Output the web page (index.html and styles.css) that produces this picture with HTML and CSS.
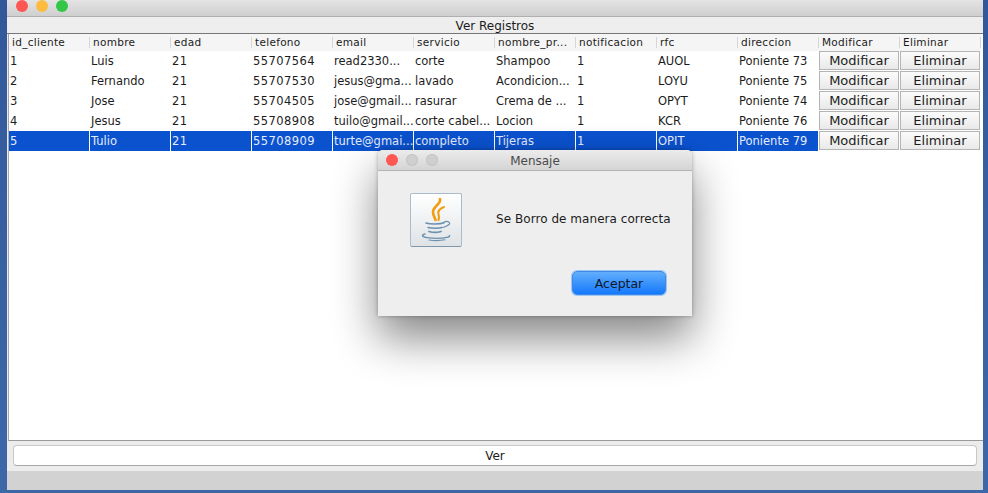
FILE: index.html
```html
<!DOCTYPE html>
<html lang="en">
<head>
    <meta charset="UTF-8">
    <meta name="viewport" content="width=device-width, initial-scale=1.0">
    <title>Ver Registros</title>
    <link rel="stylesheet" href="styles.css">
</head>
<body>
    <div class="window">
        <div class="titlebar">
            <span class="light light-red"></span>
            <span class="light light-yellow"></span>
            <span class="light light-green"></span>
        </div>
        <div class="caption">Ver Registros</div>

        <div class="table-area">
            <table class="records">
                <thead>
                    <tr>
                        <th>id_cliente</th>
                        <th>nombre</th>
                        <th>edad</th>
                        <th>telefono</th>
                        <th>email</th>
                        <th>servicio</th>
                        <th>nombre_pr...</th>
                        <th>notificacion</th>
                        <th>rfc</th>
                        <th>direccion</th>
                        <th>Modificar</th>
                        <th>Eliminar</th>
                    </tr>
                </thead>
                <tbody>
                    <tr>
                        <td>1</td><td>Luis</td><td class="num">21</td><td class="num">55707564</td><td>read2330...</td><td>corte</td><td>Shampoo</td><td>1</td><td>AUOL</td><td>Poniente 73</td>
                        <td class="cell-btn"><button class="row-btn">Modificar</button></td>
                        <td class="cell-btn"><button class="row-btn">Eliminar</button></td>
                    </tr>
                    <tr>
                        <td>2</td><td>Fernando</td><td class="num">21</td><td class="num">55707530</td><td>jesus@gma...</td><td>lavado</td><td>Acondicion...</td><td>1</td><td>LOYU</td><td>Poniente 75</td>
                        <td class="cell-btn"><button class="row-btn">Modificar</button></td>
                        <td class="cell-btn"><button class="row-btn">Eliminar</button></td>
                    </tr>
                    <tr>
                        <td>3</td><td>Jose</td><td class="num">21</td><td class="num">55704505</td><td>jose@gmail...</td><td>rasurar</td><td>Crema de ...</td><td>1</td><td>OPYT</td><td>Poniente 74</td>
                        <td class="cell-btn"><button class="row-btn">Modificar</button></td>
                        <td class="cell-btn"><button class="row-btn">Eliminar</button></td>
                    </tr>
                    <tr>
                        <td>4</td><td>Jesus</td><td class="num">21</td><td class="num">55708908</td><td>tuilo@gmail...</td><td>corte cabel...</td><td>Locion</td><td>1</td><td>KCR</td><td>Poniente 76</td>
                        <td class="cell-btn"><button class="row-btn">Modificar</button></td>
                        <td class="cell-btn"><button class="row-btn">Eliminar</button></td>
                    </tr>
                    <tr class="selected">
                        <td>5</td><td>Tulio</td><td class="num">21</td><td class="num">55708909</td><td>turte@gmai...</td><td>completo</td><td>Tijeras</td><td>1</td><td>OPIT</td><td>Poniente 79</td>
                        <td class="cell-btn"><button class="row-btn">Modificar</button></td>
                        <td class="cell-btn"><button class="row-btn">Eliminar</button></td>
                    </tr>
                </tbody>
            </table>
        </div>

        <div class="footer">
            <button class="btn-ver">Ver</button>
        </div>
        <div class="statusbar"></div>
    </div>

    <!-- Dialog floats over the table -->
    <div class="dialog">
        <div class="dialog-title">
            <span class="light light-red"></span>
            <span class="light light-off"></span>
            <span class="light light-off"></span>
            <span class="dialog-name">Mensaje</span>
        </div>
        <div class="dialog-body">
            <div class="dialog-icon">
                <svg width="34" height="44" viewBox="0 0 34 44">
                    <g fill="none" stroke="#f29c10" stroke-linecap="round">
                        <path d="M21 1c1.500 5-7 7-7 13 0 3 1.500 5 2.500 8" stroke-width="2.600"/>
                        <path d="M25 9c-5 2-6.500 4.500-5.500 7.500 .5 2 1 3.500 0 5.500" stroke-width="2.100"/>
                    </g>
                    <g fill="none" stroke="#6c90ae" stroke-linecap="round">
                        <path d="M7 25c4 1.400 14 1.400 18-.2" stroke-width="1.600"/>
                        <path d="M9 29.500c4 1 11 1 14 0" stroke-width="1.500"/>
                        <path d="M10 33.500c3 .9 9 .9 12 0" stroke-width="1.800"/>
                        <path d="M25 24c4-1.500 7 .5 5 2.500-1 1-3 2-6 3" stroke-width="1.200"/>
                        <path d="M6 36c-4 1-3 3 2 3.600 6 1 14 1 20-.2 2-.4 3-1.200 2.500-1.800" stroke-width="1.400"/>
                        <path d="M10 42c5 .8 11 .8 16-.2" stroke-width="1.100"/>
                    </g>
                </svg>
            </div>
            <div class="dialog-text">Se Borro de manera correcta</div>
        </div>
        <div class="dialog-actions">
            <button class="btn-accept">Aceptar</button>
        </div>
    </div>
</body>
</html>
```

FILE: styles.css
```css
html, body {
    margin: 0;
    height: 493px;
    overflow: hidden;
}

body {
    position: relative;
    box-sizing: border-box;
    padding: 0 5px 3px 7px;
    background: linear-gradient(to bottom, #33589a, #3d68a8);
    font-family: "DejaVu Sans", Arial, sans-serif;
    color: #1c1c1c;
}

.window {
    display: flex;
    flex-direction: column;
    height: 490px;
    background-color: #ececec;
}

.titlebar {
    display: flex;
    gap: 8px;
    height: 17px;
    box-sizing: border-box;
    padding-left: 9px;
    align-items: flex-start;
    background: linear-gradient(to bottom, #e4e4e4, #cfcfcf);
    border-bottom: 1px solid #b0b0b0;
    overflow: hidden;
}

.light {
    display: block;
    flex: none;
    width: 12px;
    height: 12px;
    border-radius: 50%;
}

.light-red {
    background-color: #fc5753;
}

.light-yellow {
    background-color: #fdbc40;
}

.light-green {
    background-color: #33c748;
}

.light-off {
    background-color: #cfcfcf;
    box-shadow: inset 0 0 0 1px #c4c4c4;
}

.caption {
    height: 17px;
    line-height: 18px;
    box-sizing: border-box;
    font-size: 12px;
    text-align: center;
    background-color: #eeeeee;
    border-bottom: 1px solid #777;
}

.table-area {
    flex: 1;
    margin-left: 1px;
    background-color: #fff;
    border-left: 1px solid #a8a8a8;
    border-bottom: 1px solid #9a9a9a;
}

.records {
    width: 972px;
    table-layout: fixed;
    border-collapse: separate;
    border-spacing: 0;
    font-size: 11.500px;
}

.records th {
    height: 17px;
    padding: 0 0 2px 3px;
    font-size: 10.500px;
    font-weight: normal;
    letter-spacing: 0.3px;
    text-align: left;
    white-space: nowrap;
    background: #f5f5f5 linear-gradient(#d6d6d6, #d6d6d6) no-repeat right center / 1px 11px;
    box-sizing: border-box;
}

.records td {
    height: 20px;
    padding: 0 0 0 1px;
    white-space: nowrap;
    border-right: 1px solid #fff;
    box-sizing: border-box;
}

.records .num {
    letter-spacing: 0.45px;
}

.records .selected td {
    background-color: #0b52cf;
    color: #e4ecfb;
}

.records .cell-btn,
.records .selected .cell-btn {
    padding: 0 0 1px 0;
    background-color: #fff;
    border-right: 0;
}

.row-btn {
    display: block;
    width: 80px;
    height: 19px;
    padding: 0;
    font-family: inherit;
    font-size: 13px;
    line-height: 17px;
    color: #1c1c1c;
    background: linear-gradient(to bottom, #fbfbfb, #e9e9e9);
    border: 1px solid #b4b4b4;
}

.footer {
    display: flex;
    height: 30px;
    box-sizing: border-box;
    padding: 4px 6px 5px 6px;
    background-color: #ececec;
}

.btn-ver {
    flex: 1;
    height: 21px;
    padding: 0;
    font-family: inherit;
    font-size: 12px;
    color: #1c1c1c;
    background-color: #fff;
    border: 1px solid #c8c8c8;
    border-bottom-color: #a8a8a8;
    border-radius: 4px;
}

.statusbar {
    height: 19px;
    background-color: #d2d2d2;
}

.dialog {
    position: absolute;
    left: 378px;
    top: 150px;
    width: 314px;
    height: 166px;
    background-color: #eeeeee;
    border-radius: 5px 5px 0 0;
    box-shadow: 0 22px 45px rgba(0, 0, 0, 0.48), 0 0 4px rgba(0, 0, 0, 0.3);
}

.dialog-title {
    position: relative;
    display: flex;
    gap: 8px;
    align-items: center;
    height: 21px;
    box-sizing: border-box;
    padding-left: 8px;
    background: linear-gradient(to bottom, #ececec, #d4d4d4);
    border-bottom: 1px solid #b4b4b4;
    border-radius: 5px 5px 0 0;
}

.dialog-name {
    position: absolute;
    left: 0;
    right: 0;
    top: 4px;
    font-size: 12px;
    text-align: center;
    color: #4a4a4a;
}

.dialog-body {
    display: flex;
    align-items: center;
    padding: 22px 0 0 32px;
}

.dialog-icon {
    display: flex;
    align-items: center;
    justify-content: center;
    width: 52px;
    height: 54px;
    box-sizing: border-box;
    background: linear-gradient(to bottom, #ffffff, #dfe3e6);
    border: 1px solid #a9bccb;
    border-bottom-color: #7f97ab;
    border-radius: 2px;
}

.dialog-text {
    margin: -2px 0 0 34px;
    font-size: 12px;
    letter-spacing: 0.05px;
    white-space: nowrap;
}

.dialog-actions {
    display: flex;
    justify-content: flex-end;
    padding: 24px 26px 0 0;
}

.btn-accept {
    width: 94px;
    height: 24px;
    padding: 0;
    font-family: inherit;
    font-size: 12.500px;
    color: #101828;
    background: linear-gradient(to bottom, #62aefc, #1479fb);
    border: 1px solid #3f8ae6;
    border-radius: 5px;
    box-shadow: 0 0 0 1px #9cc6f5;
}
```
